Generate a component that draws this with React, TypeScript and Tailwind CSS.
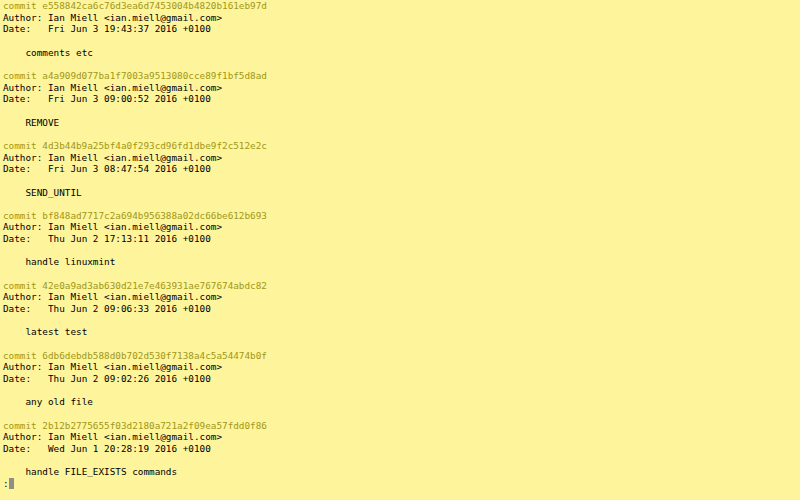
const commits = [
  { hash: "e558842ca6c76d3ea6d7453004b4820b161eb97d", date: "Fri Jun 3 19:43:37 2016 +0100", msg: "comments etc" },
  { hash: "a4a909d077ba1f7003a9513080cce89f1bf5d8ad", date: "Fri Jun 3 09:00:52 2016 +0100", msg: "REMOVE" },
  { hash: "4d3b44b9a25bf4a0f293cd96fd1dbe9f2c512e2c", date: "Fri Jun 3 08:47:54 2016 +0100", msg: "SEND_UNTIL" },
  { hash: "bf848ad7717c2a694b956388a02dc66be612b693", date: "Thu Jun 2 17:13:11 2016 +0100", msg: "handle linuxmint" },
  { hash: "42e0a9ad3ab630d21e7e463931ae767674abdc82", date: "Thu Jun 2 09:06:33 2016 +0100", msg: "latest test" },
  { hash: "6db6debdb588d0b702d530f7138a4c5a54474b0f", date: "Thu Jun 2 09:02:26 2016 +0100", msg: "any old file" },
  { hash: "2b12b2775655f03d2180a721a2f09ea57fdd0f86", date: "Wed Jun 1 20:28:19 2016 +0100", msg: "handle FILE_EXISTS commands" },
];

export default function App() {
  return (
    <div className="w-[800px] h-[500px] overflow-hidden bg-[#fef49c] px-[3px] font-['DejaVu_Sans_Mono',monospace] text-[9.34px] leading-[11.65px] text-black whitespace-pre">
      {commits.map((c, i) => (
        <div key={c.hash}>
          <div className="text-[#a09818]">commit {c.hash}</div>
          <div>Author: Ian Miell &lt;ian.miell@gmail.com&gt;</div>
          <div>Date:   {c.date}</div>
          <div>&nbsp;</div>
          <div>    {c.msg}</div>
          {i < commits.length - 1 && <div>&nbsp;</div>}
        </div>
      ))}
      <div className="flex items-center">
        <span>:</span>
        <span className="inline-block w-[5px] h-[11px] bg-[#8f8f88]" />
      </div>
    </div>
  );
}
